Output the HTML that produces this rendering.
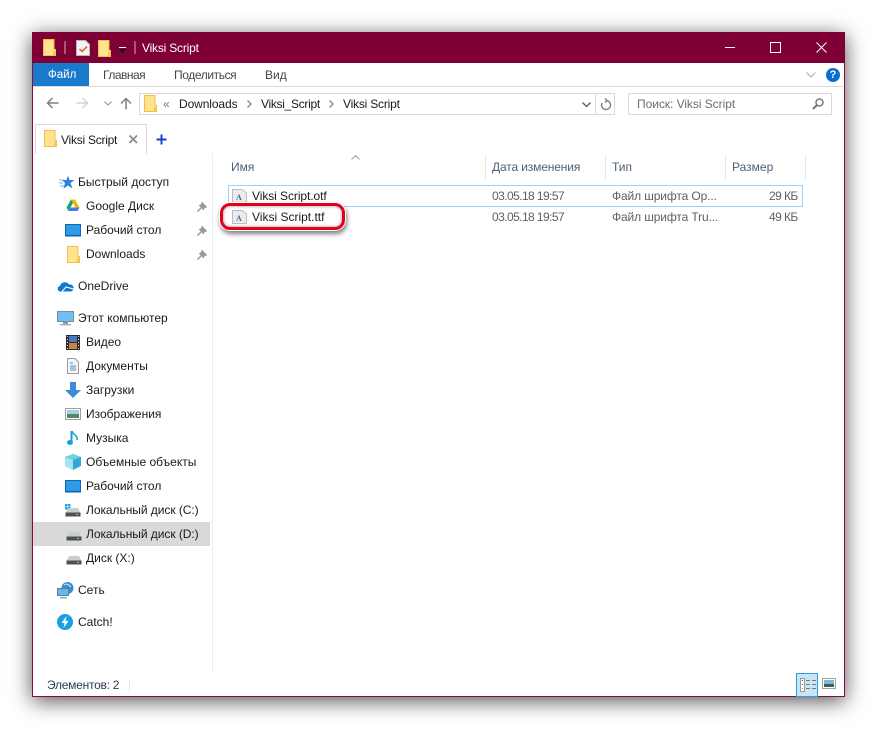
<!DOCTYPE html>
<html><head><meta charset="utf-8"><style>
html,body{margin:0;padding:0;background:#fff;width:877px;height:729px;overflow:hidden}
body{position:relative;font-family:"Liberation Sans",sans-serif;font-size:12px;color:#1a1a1a}
.a{position:absolute}
.t{position:absolute;white-space:nowrap;line-height:16px;height:16px}
svg{position:absolute;overflow:visible}
.g{color:#5f5f5f}
.d{letter-spacing:-.57px}
.sep{position:absolute;width:1px;background:#e5e5e5}
</style></head><body>
<svg width="0" height="0" style="position:absolute"><defs>
<g id="folder"><path d="M.5.5H11V10.500H12.500V16.500H.5Z" fill="#ffe38f" stroke="#eec04e"/><path d="M10 12H12.500V16.500H10Z" fill="#f4c84f"/></g>
<g id="disk"><path d="M3 5H13L15.500 10H.5Z" fill="#c9ced1"/><rect x=".5" y="9.500" width="15" height="4" fill="#4d5154"/><rect x="11" y="11" width="2" height="1" fill="#7fe05a"/></g>
<g id="desk"><rect x=".5" y=".5" width="15" height="11" fill="#2f9be8" stroke="#1166b5"/><rect y="11" width="16" height="1.500" fill="#0e5ea8"/></g>
<g id="pin"><path d="M5 1.500 9.500 6 7.500 6.500 6.500 8.500 2.500 4.500 4.500 3.500Z" fill="#9a9a9a" stroke="#9a9a9a"/><path d="M4.500 6.500 .5 10.500" stroke="#9a9a9a" stroke-width="1.500"/></g>
<g id="fnt"><path d="M.5.5H10L14.500 4V13.500H.5Z" fill="#ececec" stroke="#bcbcbc"/><text x="4" y="11" font-family="Liberation Serif" font-size="8" font-weight="bold" fill="#3a66b5">A</text></g>
</defs></svg>

<div class="a" style="left:32px;top:32px;width:811px;height:663px;background:#fff;border:1px solid #8a0a3e;box-shadow:0 4px 20px rgba(0,0,0,.68)"></div>
<div class="a" style="left:32px;top:32px;width:813px;height:31px;background:#7f0035"></div>

<!-- title bar -->
<svg style="left:43px;top:39px" width="13" height="17"><use href="#folder"/></svg>
<div class="a" style="left:64px;top:41px;width:2px;height:13px;background:#a8567a"></div>
<svg style="left:76px;top:40px" width="14" height="16"><path d="M.5.5H9.500L13.500 4.500V15.500H.5Z" fill="#f4f4f4" stroke="#b5b5b5"/><path d="M3.500 9 6 11.500 11 6.500" fill="none" stroke="#e8502a" stroke-width="1.500"/></svg>
<svg style="left:98px;top:40px" width="13" height="17"><use href="#folder"/></svg>
<svg style="left:119px;top:47px" width="8" height="7"><rect width="7" height="1" fill="#fff"/><path d="M0 2H7L3.500 6Z" fill="#111"/></svg>
<div class="a" style="left:134px;top:41px;width:2px;height:13px;background:#a8567a"></div>
<div class="t" style="left:142px;top:40px;color:#fff;letter-spacing:-.2px">Viksi Script</div>
<div class="a" style="left:725px;top:47px;width:10px;height:1px;background:#fff"></div>
<div class="a" style="left:770px;top:42px;width:9px;height:9px;border:1px solid #fff"></div>
<svg style="left:816px;top:42px" width="11" height="11"><path d="M.5.5 10.500 10.500M10.500.5.5 10.500" stroke="#fff" fill="none"/></svg>

<!-- ribbon -->
<div class="a" style="left:33px;top:63px;width:56px;height:23px;background:#1979ca"></div>
<div class="t" style="left:48px;top:67px;color:#fff;font-size:11.500px">Файл</div>
<div class="t g" style="left:103px;top:67px;color:#444;letter-spacing:-.5px">Главная</div>
<div class="t g" style="left:174px;top:67px;color:#444;letter-spacing:-.4px">Поделиться</div>
<div class="t g" style="left:265px;top:67px;color:#444">Вид</div>
<div class="a" style="left:33px;top:86px;width:810px;height:1px;background:#dadada"></div>
<svg style="left:806px;top:72px" width="10" height="6"><path d="M.5.5 5 5 9.500.5" fill="none" stroke="#a8a8a8"/></svg>
<div class="a" style="left:826px;top:68px;width:14px;height:14px;border-radius:50%;background:#0a6fd0;color:#fff;font-weight:bold;font-size:11px;line-height:14px;text-align:center">?</div>

<!-- nav -->
<svg style="left:46px;top:97px" width="13" height="12"><path d="M12.500 6H1.500M6.500 1 1.500 6 6.500 11" fill="none" stroke="#808080" stroke-width="1.500"/></svg>
<svg style="left:76px;top:97px" width="13" height="12"><path d="M.5 6H11.500M6.500 1 11.500 6 6.500 11" fill="none" stroke="#d4d4d4" stroke-width="1.500"/></svg>
<svg style="left:104px;top:101px" width="8" height="5"><path d="M.5.5 4 4 7.500.5" fill="none" stroke="#9a9a9a" stroke-width="1.200"/></svg>
<svg style="left:120px;top:97px" width="12" height="13"><path d="M6 12.500V1.500M1 6.500 6 1.500 11 6.500" fill="none" stroke="#808080" stroke-width="1.500"/></svg>
<div class="a" style="left:139px;top:93px;width:474px;height:20px;border:1px solid #d9d9d9"></div>
<div class="a" style="left:595px;top:94px;width:1px;height:20px;background:#d9d9d9"></div>
<svg style="left:144px;top:95px" width="13" height="17"><use href="#folder"/></svg>
<div class="t" style="left:163px;top:96px;color:#777">«</div>
<div class="t" style="left:179px;top:96px;letter-spacing:-.1px">Downloads</div>
<svg style="left:247px;top:100px" width="5" height="8"><path d="M.5.5 4 4 .5 7.500" fill="none" stroke="#777" stroke-width="1.200"/></svg>
<div class="t" style="left:261px;top:96px;letter-spacing:-.3px">Viksi_Script</div>
<svg style="left:329px;top:100px" width="5" height="8"><path d="M.5.5 4 4 .5 7.500" fill="none" stroke="#777" stroke-width="1.200"/></svg>
<div class="t" style="left:343px;top:96px;letter-spacing:-.2px">Viksi Script</div>
<svg style="left:582px;top:102px" width="9" height="6"><path d="M.5.5 4.500 4.500 8.500.5" fill="none" stroke="#666" stroke-width="1.500"/></svg>
<svg style="left:600px;top:98px" width="12" height="13"><path d="M6 2.500A4.500 4.500 0 1 1 2 5M5 .5 7 2.500 5 4.500" fill="none" stroke="#808080" stroke-width="1.400"/></svg>
<div class="a" style="left:628px;top:93px;width:202px;height:20px;border:1px solid #d9d9d9"></div>
<div class="t" style="left:637px;top:96px;color:#6d6d6d;letter-spacing:-.05px">Поиск: Viksi Script</div>
<svg style="left:812px;top:98px" width="12" height="12"><circle cx="7.500" cy="4.500" r="3.500" fill="none" stroke="#777" stroke-width="1.500"/><path d="M5 7 1 11" stroke="#777" stroke-width="2"/></svg>

<!-- tab -->
<div class="a" style="left:35px;top:124px;width:110px;height:29px;border:1px solid #d9d9d9;border-bottom:0;background:#fff"></div>
<svg style="left:44px;top:130px" width="13" height="17"><use href="#folder"/></svg>
<div class="t" style="left:61px;top:132px;letter-spacing:-.25px">Viksi Script</div>
<svg style="left:129px;top:135px" width="9" height="9"><path d="M.5.5 8 8M8 .5.5 8" stroke="#8c8c8c" stroke-width="1.800" fill="none"/></svg>
<svg style="left:156px;top:134px" width="11" height="11"><path d="M5.500.5V10.500M.5 5.500H10.500" stroke="#1246c8" stroke-width="2" fill="none"/></svg>

<!-- sidebar -->
<div class="sep" style="left:212px;top:153px;height:519px;background:#ececec"></div>
<div class="a" style="left:33px;top:522px;width:177px;height:24px;background:#d9d9d9"></div>

<svg style="left:59px;top:175px" width="15" height="14"><path d="M9 .5 10.500 5H15.500L11.500 8 13.500 13.500 9 10.500 4.500 13.500 6 8 3 5H7.500Z" fill="#2f82d8"/><path d="M0 5H4M0 8H4M1 11H5" stroke="#6db3ee"/></svg>
<div class="t" style="left:78px;top:174px">Быстрый доступ</div>
<svg style="left:66px;top:199px" width="14" height="13"><path d="M5 .5H9L13.500 8.500H9.500Z" fill="#f5b800"/><path d="M5 .5 .5 8.500 2.500 12 7 4Z" fill="#1fa463"/><path d="M4.500 8.500H13.500L11.500 12H2.500Z" fill="#3f7fe8"/></svg>
<div class="t" style="left:86px;top:198px">Google Диск</div>
<svg style="left:197px;top:201px" width="11" height="11"><use href="#pin"/></svg>
<svg style="left:65px;top:224px" width="16" height="13"><use href="#desk"/></svg>
<div class="t" style="left:86px;top:222px">Рабочий стол</div>
<svg style="left:197px;top:225px" width="11" height="11"><use href="#pin"/></svg>
<svg style="left:67px;top:246px" width="13" height="17"><use href="#folder"/></svg>
<div class="t" style="left:86px;top:246px">Downloads</div>
<svg style="left:197px;top:249px" width="11" height="11"><use href="#pin"/></svg>

<svg style="left:57px;top:281px" width="17" height="11"><path d="M3 10.500A2.800 2.800 0 0 1 3 5 5 5 0 0 1 12 3.500 3.500 3.500 0 0 1 14 10.500Z" fill="#0f78d4"/><path d="M5 10.500 9 6 16.500 8" stroke="#fff" fill="none"/></svg>
<div class="t" style="left:78px;top:278px">OneDrive</div>

<svg style="left:57px;top:311px" width="17" height="15"><rect x=".5" y=".5" width="16" height="10" fill="#6ec0f4" stroke="#7d8b94"/><rect x="6" y="11" width="5" height="2" fill="#8a9aa4"/><rect x="3" y="13" width="11" height="1.500" fill="#a8b4bb"/></svg>
<div class="t" style="left:78px;top:310px">Этот компьютер</div>

<svg style="left:66px;top:335px" width="14" height="15"><rect width="14" height="15" fill="#2b2b2b"/><rect x="3" y="1" width="8" height="6" fill="#4a78c8"/><rect x="3" y="8" width="8" height="6" fill="#c9853a"/><path d="M1 1.500H2M1 4.500H2M1 7.500H2M1 10.500H2M1 13.500H2M12 1.500H13M12 4.500H13M12 7.500H13M12 10.500H13M12 13.500H13" stroke="#ddd"/></svg>
<div class="t" style="left:86px;top:334px">Видео</div>
<svg style="left:67px;top:358px" width="12" height="16"><path d="M.5.5H8L11.500 4V15.500H.5Z" fill="#f4f4f4" stroke="#9d9d9d"/><path d="M3 5H6M3 8H9M3 10H9M3 12H9" stroke="#5a8fc4"/></svg>
<div class="t" style="left:86px;top:358px">Документы</div>
<svg style="left:65px;top:382px" width="16" height="16"><path d="M5 0H11V8H16L8 16 0 8H5Z" fill="#3d8ad8"/></svg>
<div class="t" style="left:86px;top:382px">Загрузки</div>
<svg style="left:65px;top:408px" width="16" height="12"><rect x=".5" y=".5" width="15" height="11" fill="#fff" stroke="#a0a0a0"/><rect x="2" y="2" width="12" height="4" fill="#a8cfe8"/><rect x="2" y="6" width="12" height="4" fill="#5d8468"/></svg>
<div class="t" style="left:86px;top:406px">Изображения</div>
<svg style="left:67px;top:430px" width="12" height="16"><path d="M4.500 1V12" stroke="#1a9be0" stroke-width="2"/><ellipse cx="3" cy="12.500" rx="3" ry="2.500" fill="#1a9be0"/><path d="M5 1C6 5 11 5 10 10" fill="none" stroke="#1a9be0" stroke-width="1.500"/></svg>
<div class="t" style="left:86px;top:430px">Музыка</div>
<svg style="left:65px;top:454px" width="16" height="16"><path d="M8 0 16 3V12L8 16 0 12V3Z" fill="#37a5d6"/><path d="M0 3 8 6V16L0 12Z" fill="#a6e4ee"/><path d="M8 0 16 3 8 6 0 3Z" fill="#70cfe6"/></svg>
<div class="t" style="left:86px;top:454px">Объемные объекты</div>
<svg style="left:65px;top:480px" width="16" height="13"><use href="#desk"/></svg>
<div class="t" style="left:86px;top:478px">Рабочий стол</div>
<svg style="left:65px;top:503px" width="16" height="14"><rect x="0" y="1" width="2.500" height="2.500" fill="#18a0e8"/><rect x="3" y="1" width="2.500" height="2.500" fill="#18a0e8"/><rect x="0" y="4" width="2.500" height="2.500" fill="#18a0e8"/><rect x="3" y="4" width="2.500" height="2.500" fill="#18a0e8"/><use href="#disk" y="0"/></svg>
<div class="t" style="left:86px;top:502px;letter-spacing:-.05px">Локальный диск (C:)</div>
<svg style="left:66px;top:527px" width="16" height="14"><use href="#disk"/></svg>
<div class="t" style="left:86px;top:526px;letter-spacing:-.05px">Локальный диск (D:)</div>
<svg style="left:66px;top:551px" width="16" height="14"><use href="#disk"/></svg>
<div class="t" style="left:86px;top:550px">Диск (X:)</div>
<svg style="left:57px;top:582px" width="17" height="17"><circle cx="10.500" cy="6" r="6" fill="#3f8bd0"/><path d="M7 3C10 1 12 3 14 5" stroke="#cfe6f7" fill="none"/><rect x=".5" y="6.500" width="11" height="7" fill="#63b6ee" stroke="#5f7c92"/><rect x="3" y="15" width="7" height="1.500" fill="#9aa8b2"/></svg>
<div class="t" style="left:78px;top:582px">Сеть</div>
<svg style="left:57px;top:614px" width="16" height="16"><circle cx="8" cy="8" r="8" fill="#1a9fe0"/><path d="M9.500 2 4.500 9H7.500L6.500 14 11.500 7H8.500Z" fill="#fff"/></svg>
<div class="t" style="left:78px;top:614px">Catch!</div>

<!-- columns -->
<svg style="left:351px;top:155px" width="9" height="5"><path d="M.5 4.500 4.500.5 8.500 4.500" fill="none" stroke="#a0a0a0"/></svg>
<div class="sep" style="left:485px;top:155px;height:24px"></div>
<div class="sep" style="left:605px;top:155px;height:24px"></div>
<div class="sep" style="left:725px;top:155px;height:24px"></div>
<div class="sep" style="left:805px;top:155px;height:24px"></div>
<div class="t g" style="left:231px;top:159px;color:#4c607a">Имя</div>
<div class="t g" style="left:492px;top:159px;color:#4c607a;letter-spacing:-.14px">Дата изменения</div>
<div class="t g" style="left:612px;top:159px;color:#4c607a">Тип</div>
<div class="t g" style="left:732px;top:159px;color:#4c607a">Размер</div>

<!-- rows -->
<div class="a" style="left:228px;top:185px;width:573px;height:20px;border:1px solid #99d1ff"></div>
<svg style="left:232px;top:189px" width="15" height="14"><use href="#fnt"/></svg>
<div class="t" style="left:252px;top:188px;letter-spacing:-.07px">Viksi Script.otf</div>
<div class="t g d" style="left:492px;top:188px">03.05.18 19:57</div>
<div class="t g" style="left:612px;top:188px;letter-spacing:-.12px">Файл шрифта Op...</div>
<div class="t g d" style="left:769px;top:188px">29 КБ</div>
<div class="t g d" style="left:492px;top:209px">03.05.18 19:57</div>
<div class="t g" style="left:612px;top:209px;letter-spacing:-.12px">Файл шрифта Tru...</div>
<div class="t g d" style="left:769px;top:209px">49 КБ</div>

<div class="a" style="left:220px;top:203px;width:119px;height:21px;border:3px solid #e3001b;border-radius:10px;background:#fff;box-shadow:0 0 0 1px #fff,1px 3px 5px 1px rgba(0,0,0,.5),inset 0 0 3px rgba(0,0,0,.45)"></div>
<svg style="left:232px;top:210px" width="15" height="14"><use href="#fnt"/></svg>
<div class="t" style="left:252px;top:209px">Viksi Script.ttf</div>

<!-- status -->
<div class="t" style="left:47px;top:677px;color:#2d3a55;letter-spacing:-.25px">Элементов: 2</div>
<div class="a" style="left:129px;top:679px;width:1px;height:12px;background:#e5e5e5"></div>
<div class="a" style="left:796px;top:673px;width:20px;height:22px;background:#c9e6f8;border:1px solid #2f9fd8"></div>
<svg style="left:800px;top:678px" width="16" height="14"><rect x=".5" y=".5" width="4" height="13" fill="#fff" stroke="#999"/><rect x="2" y="2" width="1" height="1" fill="#444"/><rect x="2" y="6" width="1" height="1" fill="#3a78d8"/><rect x="2" y="10" width="1" height="1" fill="#e0701a"/><path d="M6 2.500H10M12 2.500H16M6 6.500H10M12 6.500H16M6 10.500H10M12 10.500H16" stroke="#777"/></svg>
<svg style="left:822px;top:678px" width="14" height="11"><rect x=".5" y=".5" width="13" height="10" fill="#fff" stroke="#a5a5a5"/><rect x="2" y="2" width="10" height="4" fill="#7fb6df"/><rect x="2" y="6" width="10" height="3" fill="#3c5f58"/></svg>
</body></html>
